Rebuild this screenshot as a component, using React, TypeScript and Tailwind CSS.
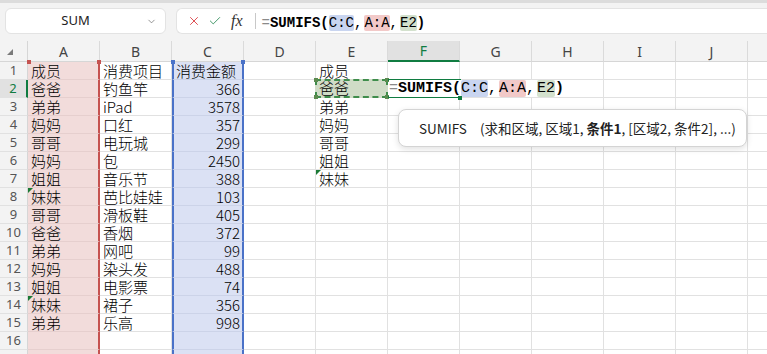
import { Check, ChevronDown, X } from "lucide-react";

const colA = ["成员", "爸爸", "弟弟", "妈妈", "哥哥", "妈妈", "姐姐", "妹妹", "哥哥", "爸爸", "弟弟", "妈妈", "姐姐", "妹妹", "弟弟"];
const colB = ["消费项目", "钓鱼竿", "iPad", "口红", "电玩城", "包", "音乐节", "芭比娃娃", "滑板鞋", "香烟", "网吧", "染头发", "电影票", "裙子", "乐高"];
const colC = ["消费金额", "366", "3578", "357", "299", "2450", "388", "103", "405", "372", "99", "488", "74", "356", "998"];
const colE = ["成员", "爸爸", "弟弟", "妈妈", "哥哥", "姐姐", "妹妹"];
const cols = ["A", "B", "C", "D", "E", "F", "G", "H", "I", "J"];
const rows = Array.from({ length: 17 }, (_, i) => i + 1);
const flagged = ["A8", "A14", "E7"];

function Formula({ size }: { size: "bar" | "cell" }) {
  const text = size === "bar" ? "text-[14px]" : "text-[15px]";
  return (
    <span className={`${text} font-['Liberation_Mono',monospace] leading-[17px] whitespace-nowrap text-black`}>
      <span className="text-[#8a8a8a]">=</span>
      <span className="font-bold">SUMIFS(</span>
      <span className="bg-[#c9d5f0] rounded-[2px]">C:C</span>
      <span className="mr-[2px]">,</span>
      <span className="bg-[#f2c9c8] rounded-[2px]">A:A</span>
      <span className="mr-[2px]">,</span>
      <span className="bg-[#d3e1cd] rounded-[2px]">E2</span>
      <span className="font-bold">)</span>
    </span>
  );
}

function Toolbar() {
  return (
    <div className="flex h-[41px] gap-[10px] border-t-[3px] border-[#dcdcdc] bg-[#f3f3f3] pl-[5px] pt-[5px]">
      <div className="relative flex h-[26px] w-[161px] items-center justify-center rounded-[6px] border border-[#e3e3e3] bg-white pr-[20px] font-['Noto_Sans',sans-serif] text-[13px] text-[#222]">
        SUM
        <ChevronDown className="absolute right-[8px] top-[7px] h-[11px] w-[11px] text-[#666]" strokeWidth={1.5} />
      </div>
      <div className="flex h-[26px] flex-1 items-center rounded-l-[6px] border border-r-0 border-[#e3e3e3] bg-white pl-[10px]">
        <X className="h-[14px] w-[14px] text-[#d9383e]" strokeWidth={1.5} />
        <Check className="ml-[7px] h-[14px] w-[14px] text-[#2a8a55]" strokeWidth={1.5} />
        <span className="ml-[9px] font-['Liberation_Serif',serif] text-[16px] italic leading-none text-[#333]">fx</span>
        <span className="ml-[12px] h-[16px] w-px bg-[#c8c8c8]" />
        <span className="ml-[6px]">
          <Formula size="bar" />
        </span>
      </div>
    </div>
  );
}

function Handle({ pos, color }: { pos: string; color: string }) {
  return <span className={`absolute z-20 h-[4px] w-[4px] ${pos} ${color}`} />;
}

function Cell({ col, row }: { col: string; row: number }) {
  const id = `${col}${row}`;
  let cls = "border-[#e1e1e1] bg-white";
  let text = "";
  let align = "pl-[3px]";

  if (col === "A") {
    cls = "border-[#e6cfce] border-r-2 border-r-[#c55250] bg-[#f2dcdb]";
    text = colA[row - 1] ?? "";
  } else if (col === "B") {
    text = colB[row - 1] ?? "";
  } else if (col === "C") {
    cls = "border-[#ccd3e8] border-l-2 border-l-[#4a72c8] border-r-2 border-r-[#4a72c8] bg-[#dbe1f4]";
    text = colC[row - 1] ?? "";
    align = row === 1 ? "pl-[2px]" : "pr-[2px] text-right";
  } else if (col === "E") {
    text = colE[row - 1] ?? "";
  }

  return (
    <div
      className={`relative h-[18px] overflow-visible border-b border-r font-['Noto_Sans_CJK_SC',sans-serif] text-[15px] font-light leading-[17px] whitespace-nowrap text-black ${cls} ${align}`}
    >
      {text}
      {flagged.includes(id) && (
        <span className="absolute left-0 top-0 h-0 w-0 border-r-[5px] border-t-[5px] border-r-transparent border-t-[#1b7a35]" />
      )}
      {id === "A1" && (
        <>
          <Handle pos="-top-[2px] -left-[1px]" color="bg-[#c55250]" />
          <Handle pos="-top-[2px] -right-[3px]" color="bg-[#c55250]" />
        </>
      )}
      {id === "C1" && (
        <>
          <Handle pos="-top-[2px] -left-[3px]" color="bg-[#4a72c8]" />
          <Handle pos="-top-[2px] -right-[3px]" color="bg-[#4a72c8]" />
        </>
      )}
      {id === "E2" && (
        <span className="absolute -left-[1px] -top-[1px] z-10 h-[19px] w-[73px] border-2 border-dashed border-[#3f8d4c] bg-[#d0dcc7] pl-[2px] leading-[14px]">
          {text}
          <Handle pos="-top-[3px] -left-[3px]" color="bg-[#5b8a4e]" />
          <Handle pos="-top-[3px] -right-[3px]" color="bg-[#5b8a4e]" />
          <Handle pos="-bottom-[3px] -left-[3px]" color="bg-[#5b8a4e]" />
          <Handle pos="-bottom-[3px] -right-[3px]" color="bg-[#5b8a4e]" />
        </span>
      )}
      {id === "F2" && (
        <>
          <span className="absolute -top-[1px] left-0 z-10 h-[19px] w-[73px] border-y-2 border-[#107c41]" />
          <span className="absolute left-[1px] top-0 z-10 flex h-[17px] items-center bg-white pr-[2px]">
            <Formula size="cell" />
          </span>
          <Handle pos="-bottom-[3px] -right-[3px]" color="bg-[#107c41]" />
        </>
      )}
    </div>
  );
}

function Sheet() {
  return (
    <div className="relative">
      <div className="grid grid-cols-[28px_repeat(10,72px)_1fr]">
        <div className="relative h-[21px] border-b border-r border-[#d6d6d6] bg-[#f3f3f3]">
          <svg className="absolute left-[7px] top-[8px]" width="6" height="6" viewBox="0 0 6 6">
            <polygon points="6,0 6,6 0,6" fill="#7a7a7a" />
          </svg>
        </div>
        {cols.map((c) => (
          <div
            key={c}
            className={
              c === "F"
                ? "flex h-[21px] items-center justify-center border-b-2 border-r border-b-[#107c41] border-r-[#dadada] bg-[#e1e1e1] font-['Noto_Sans',sans-serif] text-[14px] text-[#107c41]"
                : "flex h-[21px] items-center justify-center border-b border-r border-b-[#d6d6d6] border-r-[#dadada] bg-[#f3f3f3] font-['Noto_Sans',sans-serif] text-[14px] text-[#444]"
            }
          >
            {c}
          </div>
        ))}
        <div className="h-[21px] border-b border-[#d6d6d6] bg-[#f3f3f3]" />

        {rows.map((r) => (
          <div key={r} className="contents">
            <div
              className={
                r === 2
                  ? "flex h-[18px] items-center justify-center border-b border-r-2 border-b-[#e1e1e1] border-r-[#107c41] bg-[#e1e1e1] font-['Noto_Sans',sans-serif] text-[13px] text-[#107c41]"
                  : "flex h-[18px] items-center justify-center border-b border-r border-b-[#e1e1e1] border-r-[#d6d6d6] bg-[#f3f3f3] font-['Noto_Sans',sans-serif] text-[13px] text-[#555]"
              }
            >
              {r < 17 ? r : ""}
            </div>
            {cols.map((c) => (
              <Cell key={c} col={c} row={r} />
            ))}
            <div className="h-[18px] border-b border-[#e1e1e1]" />
          </div>
        ))}
      </div>

      <div className="absolute left-[398px] top-[68px] z-30 flex h-[38px] w-[349px] items-center rounded-[8px] border border-[#d4d4d4] bg-white pl-[20px] font-['Noto_Sans_CJK_SC',sans-serif] text-[13.5px] text-[#222] shadow-[0_2px_6px_rgba(0,0,0,0.12)]">
        <span>SUMIFS</span>
        <span className="ml-[13px]">
          (求和区域, 区域1, <b>条件1</b>, [区域2, 条件2], ...)
        </span>
      </div>
    </div>
  );
}

export default function App() {
  return (
    <div className="h-[354px] w-[767px] overflow-hidden bg-white">
      <Toolbar />
      <Sheet />
    </div>
  );
}
